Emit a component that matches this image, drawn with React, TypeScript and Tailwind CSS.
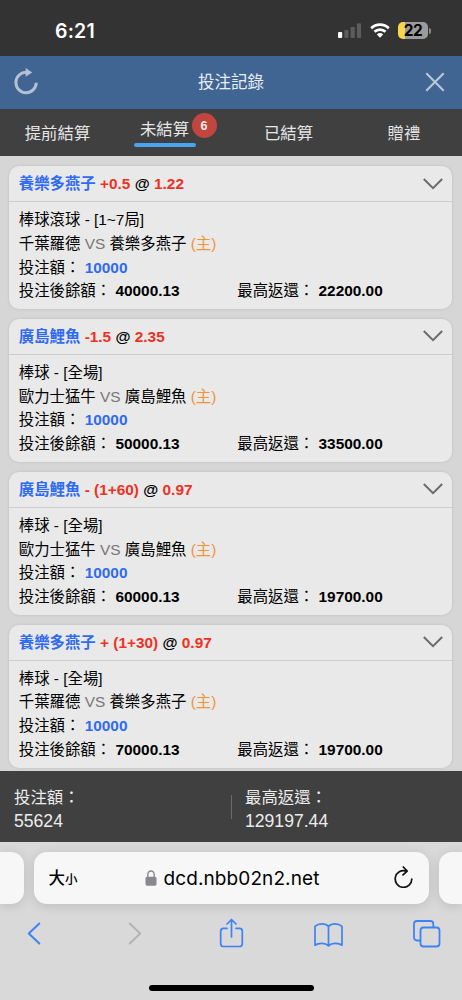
type Bet = {
  id: number;
  team: string;
  handicap: string;
  odds: string;
  league: string;
  home: string;
  away: string;
  stake: string;
  balance: string;
  maxReturn: string;
};

const bets: Bet[] = [
  {
    id: 1,
    team: "養樂多燕子",
    handicap: "+0.5",
    odds: "1.22",
    league: "棒球滾球 - [1~7局]",
    away: "千葉羅德",
    home: "養樂多燕子",
    stake: "10000",
    balance: "40000.13",
    maxReturn: "22200.00",
  },
  {
    id: 2,
    team: "廣島鯉魚",
    handicap: "-1.5",
    odds: "2.35",
    league: "棒球 - [全場]",
    away: "歐力士猛牛",
    home: "廣島鯉魚",
    stake: "10000",
    balance: "50000.13",
    maxReturn: "33500.00",
  },
  {
    id: 3,
    team: "廣島鯉魚",
    handicap: "- (1+60)",
    odds: "0.97",
    league: "棒球 - [全場]",
    away: "歐力士猛牛",
    home: "廣島鯉魚",
    stake: "10000",
    balance: "60000.13",
    maxReturn: "19700.00",
  },
  {
    id: 4,
    team: "養樂多燕子",
    handicap: "+ (1+30)",
    odds: "0.97",
    league: "棒球 - [全場]",
    away: "千葉羅德",
    home: "養樂多燕子",
    stake: "10000",
    balance: "70000.13",
    maxReturn: "19700.00",
  },
];

function StatusBar() {
  return (
    <div className="flex h-14 items-center justify-between bg-[#333333] pl-[55px] pr-[31px] pt-[5px] font-['Inter','Liberation_Sans',sans-serif] text-white">
      <span className="mt-[2px] text-[19.5px] font-semibold leading-none tracking-[0.2px]">6:21</span>
      <div className="flex items-center">
        <svg className="h-[15px] w-6" viewBox="0 0 24 15">
          <rect x="0" y="9" width="4.2" height="6" rx="1" fill="#fff" />
          <rect x="6.3" y="7" width="4.2" height="8" rx="1" fill="#5c5c5c" />
          <rect x="12.6" y="4" width="4.2" height="11" rx="1" fill="#5c5c5c" />
          <rect x="18.9" y="0.3" width="4.2" height="14.7" rx="1" fill="#5c5c5c" />
        </svg>
        <svg className="ml-2 h-[15px] w-5" viewBox="0 0 20 15" fill="none" stroke="#fff" strokeWidth="2.7">
          <path d="M1.2 5.2A12.6 12.6 0 0 1 18.8 5.2" />
          <path d="M4.5 8.8A7.9 7.9 0 0 1 15.5 8.8" />
          <path d="M10 14.8L6.9 11.4A4.4 4.4 0 0 1 13.1 11.4Z" fill="#fff" stroke="none" />
        </svg>
        <div className="ml-2 flex h-[17px] w-[30px] items-center justify-center overflow-hidden rounded-[5px] bg-[linear-gradient(to_right,#f8d64a_7px,#9b9b9b_7px)]">
          <span className="text-[15.5px] font-bold leading-none tracking-[-0.4px] text-black">22</span>
        </div>
        <div className="ml-px h-[6px] w-[2px] rounded-r-full bg-[#8a8a8a]" />
      </div>
    </div>
  );
}

function TitleBar() {
  return (
    <header className="flex h-[53px] items-center justify-between bg-[#406593] pb-px pl-[14px] pr-[17px]">
      <svg className="mb-[2px] h-[27px] w-6" viewBox="0 0 24 27" fill="none">
        <path d="M12.5 4.3A10.2 10.2 0 1 0 22.3 14.8" stroke="#b3c1d4" strokeWidth="3" />
        <path d="M11.7 0L18.2 4.4L11.7 8.8Z" fill="#b3c1d4" />
      </svg>
      <h1 className="ml-[-1px] text-[16.5px] text-[#e8edf3]">投注記錄</h1>
      <svg className="h-5 w-5" viewBox="0 0 20 20" fill="none" stroke="#b9c6d7" strokeWidth="2.2">
        <path d="M1.3 1.3L18.7 18.7M18.7 1.3L1.3 18.7" />
      </svg>
    </header>
  );
}

function Tabs() {
  return (
    <nav className="flex h-[47px] bg-[#404040] text-[16.4px] leading-6 text-[#e6e6e6]">
      <div className="w-[115px] pt-3 text-center">提前結算</div>
      <div className="flex w-[116px] justify-center pt-2">
        <div className="relative ml-[-16px] w-[62px] text-center">
          <span className="ml-[-1px]">未結算</span>
          <div className="mt-[2px] h-[3.5px] rounded-full bg-[#4aa3ee]" />
          <span className="absolute left-[57.5px] top-[-4px] flex h-[25px] w-[25px] items-center justify-center rounded-full bg-[#c24640] text-[12.5px] font-bold text-[#f4eaea]">
            6
          </span>
        </div>
      </div>
      <div className="w-[115px] pt-3 text-center">已結算</div>
      <div className="w-[116px] pt-3 text-center">贈禮</div>
    </nav>
  );
}

function BetCard({ bet }: { bet: Bet }) {
  return (
    <article className="h-[143px] shrink-0 rounded-[10px] bg-[#e9e9e9] text-[15.4px] text-black shadow-[0_0_3px_rgba(0,0,0,0.12)]">
      <div className="flex h-[36px] items-center justify-between border-b border-[#cdcdcd] pl-[9.5px] pr-[9px]">
        <p className="whitespace-pre font-bold text-[#ee3124]">
          <span className="text-[#2f6bf2]">{bet.team}</span> {bet.handicap}{" "}
          <span className="text-black">@</span> {bet.odds}
        </p>
        <svg className="h-3 w-5" viewBox="0 0 20 12" fill="none" stroke="#6b6b6b" strokeWidth="2">
          <path d="M0.8 1L10 10.2L19.2 1" />
        </svg>
      </div>
      <div className="px-[9.5px] pt-[6px] leading-[23.8px]">
        <p>{bet.league}</p>
        <p>
          {bet.away} <span className="text-[#777777]">VS</span> {bet.home}{" "}
          <span className="text-[#f0943a]">(主)</span>
        </p>
        <p>
          投注額： <b className="text-[#2f6bf2]">{bet.stake}</b>
        </p>
        <div className="flex">
          <p className="w-[218.5px]">
            投注後餘額： <b>{bet.balance}</b>
          </p>
          <p>
            最高返還： <b>{bet.maxReturn}</b>
          </p>
        </div>
      </div>
    </article>
  );
}

function Summary() {
  return (
    <footer className="flex h-[71px] items-center bg-[#404040] text-[#ececec]">
      <div className="w-[231px] pl-[14px] pt-[6px]">
        <p className="text-[16.4px] leading-[23px]">投注額：</p>
        <p className="text-[17.6px] leading-[25px]">55624</p>
      </div>
      <div className="h-6 w-px bg-[#6a6a6a]" />
      <div className="pl-[13px] pt-[6px]">
        <p className="text-[16.4px] leading-[23px]">最高返還：</p>
        <p className="text-[17.6px] leading-[25px]">129197.44</p>
      </div>
    </footer>
  );
}

function BrowserBar() {
  return (
    <div className="flex h-[158px] flex-col items-center bg-[#d9d9d9] pt-[10px]">
      <div className="flex w-full justify-between">
        <div className="h-[52px] w-[23.5px] rounded-r-[13px] bg-[#f7f7f7] shadow-[0_2px_12px_rgba(0,0,0,0.13)]" />
        <div className="flex h-[52px] w-[395px] items-center rounded-[13px] bg-[#f7f7f7] pl-[15px] pr-4 text-black shadow-[0_2px_12px_rgba(0,0,0,0.13)]">
          <span className="flex w-[96px] items-baseline font-medium leading-none">
            <span className="text-[16.5px]">大</span>
            <span className="text-[12.5px]">小</span>
          </span>
          <svg className="h-4 w-3" viewBox="0 0 12 16">
            <path d="M2.8 7V4.6a3.2 3.6 0 0 1 6.4 0V7" fill="none" stroke="#89898d" strokeWidth="1.4" />
            <rect x="0.5" y="6.7" width="11" height="9" rx="1.6" fill="#89898d" />
          </svg>
          <span className="ml-[7px] mt-[2px] font-['Inter','Liberation_Sans',sans-serif] text-[19px] tracking-[0.1px]">
            dcd.nbb02n2.net
          </span>
          <svg className="mb-[2px] ml-auto h-[22px] w-[19px]" viewBox="0 0 19 22" fill="none" stroke="#111" strokeWidth="1.7" strokeLinecap="round" strokeLinejoin="round">
            <path d="M12 5.1A8.3 8.3 0 1 0 17.8 13" />
            <path d="M9.3 1L13.2 5.1L9 8.9" />
          </svg>
        </div>
        <div className="h-[52px] w-[23.5px] rounded-l-[13px] bg-[#f7f7f7] shadow-[0_2px_12px_rgba(0,0,0,0.13)]" />
      </div>
      <div className="mt-[14px] flex w-full items-center pl-[27px] text-[#3d83f4]">
        <svg className="h-[23px] w-[14px]" viewBox="0 0 14 23" fill="none" stroke="currentColor" strokeWidth="2" strokeLinecap="round" strokeLinejoin="round">
          <path d="M12.3 1.5L1.8 11.5L12.3 21.5" />
        </svg>
        <svg className="ml-[87px] h-[23px] w-[14px]" viewBox="0 0 14 23" fill="none" stroke="#b2b2b2" strokeWidth="1.9" strokeLinecap="round" strokeLinejoin="round">
          <path d="M1.7 1.5L12.2 11.5L1.7 21.5" />
        </svg>
        <svg className="ml-[76.5px] h-[31px] w-[25px]" viewBox="0 0 25 31" fill="none" stroke="currentColor" strokeWidth="1.7" strokeLinecap="round" strokeLinejoin="round">
          <path d="M8 10.4H4.5A2.8 2.8 0 0 0 1.7 13.2V25.7A2.8 2.8 0 0 0 4.5 28.5H20.5A2.8 2.8 0 0 0 23.3 25.7V13.2A2.8 2.8 0 0 0 20.5 10.4H17" />
          <path d="M12.5 19V1.5M8 6L12.5 1.5L17 6" />
        </svg>
        <svg className="ml-[70.5px] mt-[2px] h-6 w-[29px]" viewBox="0 0 29 24" fill="none" stroke="currentColor" strokeWidth="1.7" strokeLinejoin="round">
          <path d="M14.5 3.4C11.5 0 4.5 0 1 3.4V22.2C4.5 19.6 11.5 19.6 14.5 22.8C17.5 19.6 24.5 19.6 28 22.2V3.4C24.5 0 17.5 0 14.5 3.4V22.8" />
        </svg>
        <svg className="ml-[70px] h-7 w-7" viewBox="0 0 28 28" fill="none" stroke="currentColor" strokeWidth="1.8" strokeLinejoin="round">
          <rect x="7.5" y="7.5" width="19" height="19" rx="3" />
          <path d="M7.5 20.5H4A3 3 0 0 1 1 17.5V4A3 3 0 0 1 4 1H17.3A3 3 0 0 1 20.3 4V7.5" />
        </svg>
      </div>
      <div className="mb-[9px] mt-auto h-[6px] w-[165px] rounded-full bg-black" />
    </div>
  );
}

export default function App() {
  return (
    <div
      lang="zh-TW"
      className="flex h-[1000px] w-[462px] flex-col overflow-hidden bg-[#d6d6d6] font-['Liberation_Sans','Noto_Sans_CJK_TC',sans-serif]"
    >
      <StatusBar />
      <TitleBar />
      <Tabs />
      <main className="flex h-[615px] flex-col gap-[9.9px] overflow-hidden pl-[9.3px] pr-[9.7px] pt-[10px]">
        {bets.map((bet) => (
          <BetCard key={bet.id} bet={bet} />
        ))}
      </main>
      <Summary />
      <BrowserBar />
    </div>
  );
}
